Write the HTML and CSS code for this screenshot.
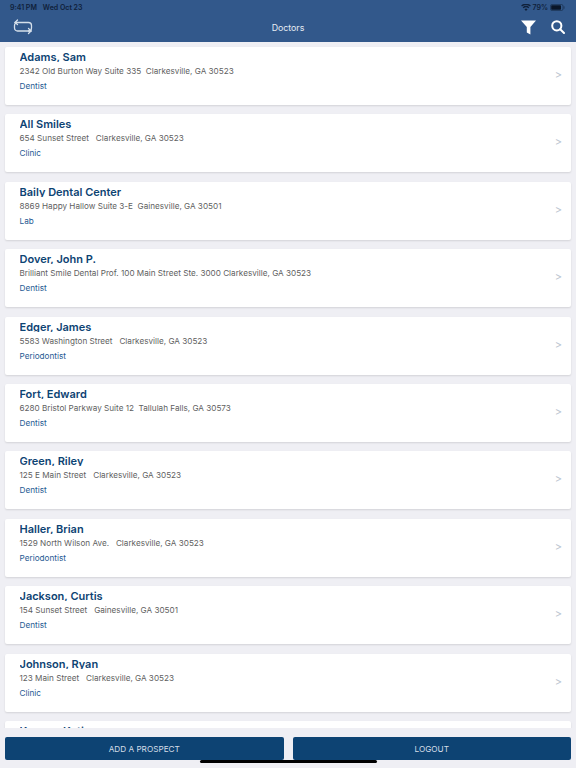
FILE: index.html
```html
<!DOCTYPE html>
<html lang="en">
<head>
<meta charset="utf-8">
<title>Doctors</title>
<link rel="stylesheet" href="styles.css">
</head>
<body>
<div class="app">
  <header class="header">
    <div class="status">
      <div class="status-left"><span>9:41 PM</span><span>Wed Oct 23</span></div>
      <div class="status-right">
        <svg class="wifi" width="10" height="7" viewBox="0 0 11 8"><path d="M5.500 8 3.700 5.900a2.700 2.700 0 0 1 3.600 0zM2.800 4.900 1.700 3.700a5.700 5.700 0 0 1 7.600 0L8.200 4.900a4.100 4.100 0 0 0-5.400 0zM.9 2.800 0 1.700a8.200 8.200 0 0 1 11 0l-.9 1.100a6.900 6.900 0 0 0-9.200 0z" fill="#10213a"/></svg>
        <span>79%</span>
        <svg class="battery" width="15" height="7" viewBox="0 0 15 7"><rect x=".5" y=".5" width="12.500" height="6" rx="1.500" fill="none" stroke="#10213a" stroke-opacity=".5"/><rect x="1.200" y="1.200" width="9.800" height="4.600" rx=".8" fill="#0a1628"/><rect x="13.600" y="2.300" width="1" height="2.400" fill="#10213a" fill-opacity=".5"/></svg>
      </div>
    </div>
    <div class="nav">
      <svg class="icon-switch" width="20" height="16" viewBox="0 0 20 16" fill="none" stroke="#d5dfea" stroke-width="1.300" stroke-linecap="round" stroke-linejoin="round"><path d="M2 3.500H15.500a3 3 0 0 1 3 3V9a3 3 0 0 1-3 3H18"/><path d="M4.500 1 2 3.500 4.500 5.500"/><path d="M18 12H4.500a3 3 0 0 1-3-3V6.500a3 3 0 0 1 1-2.200"/><path d="M15.500 9.500 18 12l-2.500 2.500"/></svg>
      <span class="nav-title">Doctors</span>
      <div class="nav-actions">
        <svg width="15" height="15" viewBox="0 0 15 15"><path d="M0 .5h15L9.400 7v7.500L5.800 12.500V7z" fill="#fff"/></svg>
        <svg width="14" height="14" viewBox="0 0 14 14" fill="none" stroke="#fff" stroke-width="2"><circle cx="5.800" cy="5.800" r="4.600"/><path d="M9.200 9.200 13 13" stroke-linecap="round"/></svg>
      </div>
    </div>
  </header>
  <main class="list">
    <a class="card"><div class="card-body"><div class="name">Adams, Sam</div><div class="address">2342 Old Burton Way Suite 335  Clarkesville, GA 30523</div><div class="type">Dentist</div></div><span class="chevron">&gt;</span></a>
    <a class="card"><div class="card-body"><div class="name">All Smiles</div><div class="address">654 Sunset Street   Clarkesville, GA 30523</div><div class="type">Clinic</div></div><span class="chevron">&gt;</span></a>
    <a class="card"><div class="card-body"><div class="name">Baily Dental Center</div><div class="address">8869 Happy Hallow Suite 3-E  Gainesville, GA 30501</div><div class="type">Lab</div></div><span class="chevron">&gt;</span></a>
    <a class="card"><div class="card-body"><div class="name">Dover, John P.</div><div class="address">Brilliant Smile Dental Prof. 100 Main Street Ste. 3000 Clarkesville, GA 30523</div><div class="type">Dentist</div></div><span class="chevron">&gt;</span></a>
    <a class="card"><div class="card-body"><div class="name">Edger, James</div><div class="address">5583 Washington Street   Clarkesville, GA 30523</div><div class="type">Periodontist</div></div><span class="chevron">&gt;</span></a>
    <a class="card"><div class="card-body"><div class="name">Fort, Edward</div><div class="address">6280 Bristol Parkway Suite 12  Tallulah Falls, GA 30573</div><div class="type">Dentist</div></div><span class="chevron">&gt;</span></a>
    <a class="card"><div class="card-body"><div class="name">Green, Riley</div><div class="address">125 E Main Street   Clarkesville, GA 30523</div><div class="type">Dentist</div></div><span class="chevron">&gt;</span></a>
    <a class="card"><div class="card-body"><div class="name">Haller, Brian</div><div class="address">1529 North Wilson Ave.   Clarkesville, GA 30523</div><div class="type">Periodontist</div></div><span class="chevron">&gt;</span></a>
    <a class="card"><div class="card-body"><div class="name">Jackson, Curtis</div><div class="address">154 Sunset Street   Gainesville, GA 30501</div><div class="type">Dentist</div></div><span class="chevron">&gt;</span></a>
    <a class="card"><div class="card-body"><div class="name">Johnson, Ryan</div><div class="address">123 Main Street   Clarkesville, GA 30523</div><div class="type">Clinic</div></div><span class="chevron">&gt;</span></a>
    <a class="card"><div class="card-body"><div class="name">Kenner, Katie</div><div class="address">77 Lake Road   Clarkesville, GA 30523</div><div class="type">Dentist</div></div><span class="chevron">&gt;</span></a>
  </main>
  <footer class="footer">
    <button class="btn">ADD A PROSPECT</button>
    <button class="btn">LOGOUT</button>
  </footer>
  <div class="home-bar"></div>
</div>
</body>
</html>
```
FILE: styles.css
```css
* { box-sizing: border-box; }
html, body { margin: 0; height: 100%; }
body { font-family: Inter, "Liberation Sans", sans-serif; background: #efeff4; overflow: hidden; }
.app { width: 576px; height: 768px; display: flex; flex-direction: column; position: relative; }
.header { height: 42px; flex: none; background: #32588b; padding: 0 11px 0 9px; display: flex; flex-direction: column; }
.status { height: 14px; display: flex; justify-content: space-between; align-items: center; font-size: 7px; font-weight: 600; color: #10213a; }
.status-left { display: flex; gap: 6px; margin-left: 1px; }
.status-right { display: flex; align-items: center; gap: 2px; }
.nav { flex: 1; display: flex; align-items: center; justify-content: space-between; position: relative; padding-left: 4px; padding-bottom: 2px; }
.nav-title { position: absolute; left: -9px; width: 576px; text-align: center; font-size: 8.8px; color: #e6ecf3; }
.nav-actions { display: flex; align-items: center; gap: 15px; }
.list { flex: none; height: 686px; overflow: hidden; padding: 5px 5px 0; display: flex; flex-direction: column; gap: 9.4px; }
.card { flex: none; height: 58px; background: #fff; border-radius: 2px; box-shadow: 0 1px 2px rgba(0,0,0,.12); display: flex; justify-content: space-between; align-items: center; padding: 0 9px 0 14.5px; }
.card-body { align-self: flex-start; padding-top: 4px; display: flex; flex-direction: column; }
.name { font-size: 11px; font-weight: 600; color: #0d4373; height: 11px; line-height: 12px; overflow: hidden; }
.address { margin-top: 3px; font-size: 8.16px; line-height: 13px; color: #5f5f5f; white-space: pre; }
.type { margin-top: 2px; font-size: 8.2px; line-height: 13px; color: #1f5a93; }
.chevron { font-size: 11px; color: #bcc5d0; margin-bottom: 2px; }
.footer { flex: 1; display: flex; gap: 9px; padding: 9px 5px 0; background: #efeff4; align-items: flex-start; position: relative; }
.btn { flex: 1; height: 23px; border: 0; border-radius: 2px; background: #0d4373; color: #d5dee8; font: 400 8.2px Inter, sans-serif; }
.home-bar { position: absolute; left: 200px; bottom: 5px; width: 177px; height: 3px; background: #000; border-radius: 2px; }
```
